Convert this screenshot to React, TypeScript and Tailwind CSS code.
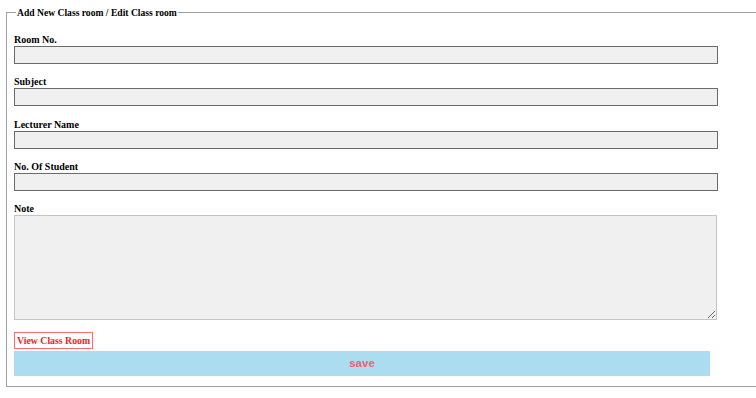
// App.tsx
const fields = ["Room No.", "Subject", "Lecturer Name", "No. Of Student"];

export default function App() {
  const labelCls = "block text-[10px] leading-[13px] font-bold text-black";
  return (
    <div className="w-[756px] h-[398px] overflow-hidden bg-white pt-[6px] font-['Liberation_Serif',serif]">
      <fieldset className="ml-[6px] w-[770px] border border-[#a0a0a0] pl-[7px] pr-[7px] pb-[10px] pt-[14px]">
        <legend className="ml-[2px] px-[1px] text-[9.6px] leading-[13px] font-bold text-black">
          Add New Class room / Edit Class room
        </legend>

        {fields.map((f) => (
          <div key={f} className="mb-[11.3px]">
            <label className={labelCls}>{f}</label>
            <input
              type="text"
              className="block w-[704px] h-[18px] border border-[#6b6b6b] bg-[#f0f0f0] outline-none"
            />
          </div>
        ))}

        <div>
          <label className={labelCls}>Note</label>
          <textarea className="block w-[703px] h-[105px] border border-[#c4c4c4] bg-[#f0f0f0] outline-none" />
        </div>

        <button className="mt-[12px] block h-[17px] px-[2px] border border-[#ff6b6b] text-[9.8px] leading-[13px] font-bold text-[#ff2020]">
          View Class Room
        </button>
        <button className="mt-[2px] block w-[696px] h-[25px] bg-[#acdcf0] font-['Liberation_Sans',sans-serif] text-[11.5px] font-bold text-[#f06070]">
          save
        </button>
      </fieldset>
    </div>
  );
}
